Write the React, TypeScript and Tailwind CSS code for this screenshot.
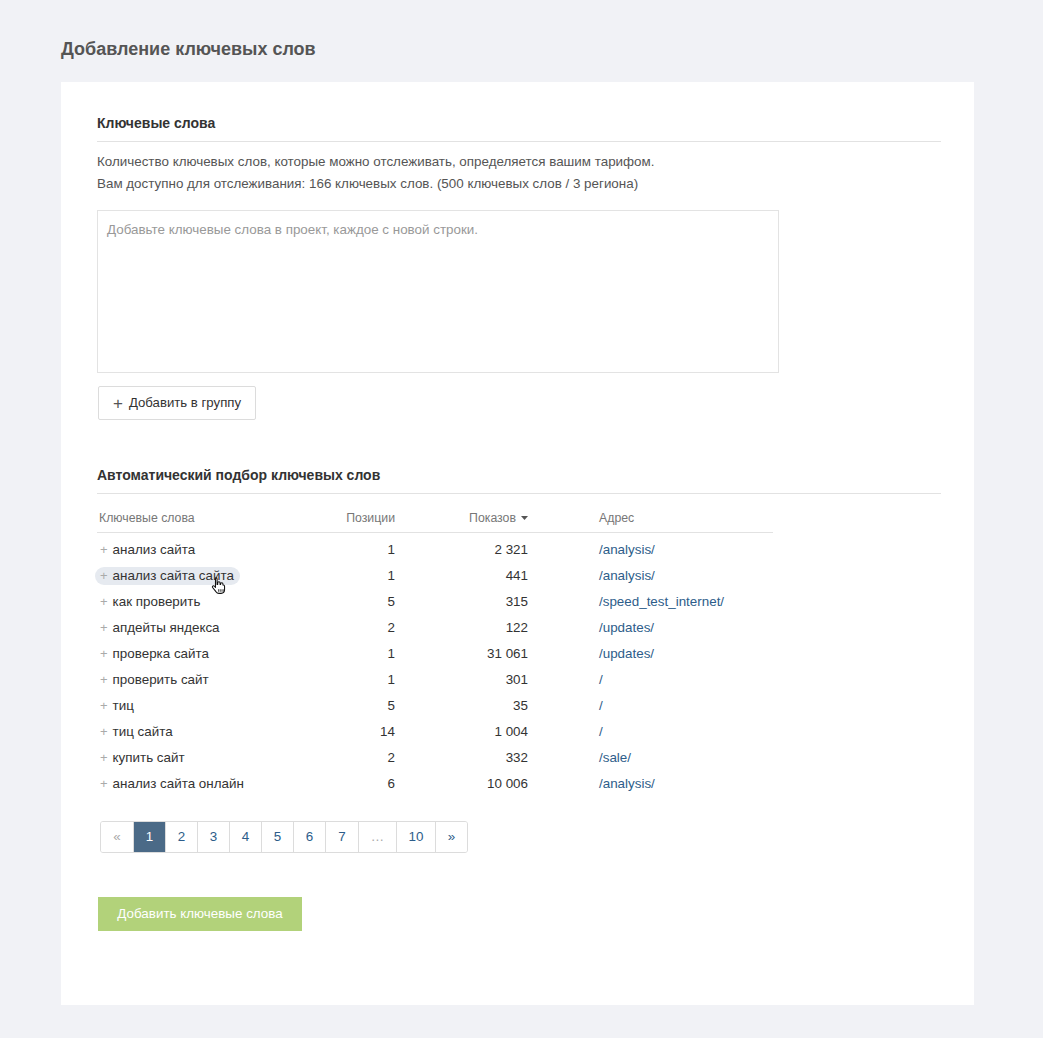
import React from "react";

const ROWS = [
    { kw: "анализ сайта", pos: "1", shows: "2 321", url: "/analysis/" },
    { kw: "анализ сайта сайта", pos: "1", shows: "441", url: "/analysis/", hover: true },
    { kw: "как проверить", pos: "5", shows: "315", url: "/speed_test_internet/" },
    { kw: "апдейты яндекса", pos: "2", shows: "122", url: "/updates/" },
    { kw: "проверка сайта", pos: "1", shows: "31 061", url: "/updates/" },
    { kw: "проверить сайт", pos: "1", shows: "301", url: "/" },
    { kw: "тиц", pos: "5", shows: "35", url: "/" },
    { kw: "тиц сайта", pos: "14", shows: "1 004", url: "/" },
    { kw: "купить сайт", pos: "2", shows: "332", url: "/sale/" },
    { kw: "анализ сайта онлайн", pos: "6", shows: "10 006", url: "/analysis/" },
];

const PAGES = [
    { label: "«", w: "w-[32px]", muted: true },
    { label: "1", w: "w-[32px]", active: true },
    { label: "2", w: "w-[32px]" },
    { label: "3", w: "w-[32px]" },
    { label: "4", w: "w-[32px]" },
    { label: "5", w: "w-[32px]" },
    { label: "6", w: "w-[32px]" },
    { label: "7", w: "w-[33px]" },
    { label: "…", w: "w-[38px]", muted: true },
    { label: "10", w: "w-[39px]" },
    { label: "»", w: "w-[32px]" },
];

function HandCursor() {
    return (
        <svg width="16" height="19" viewBox="0 0 15 17" className="absolute left-[114px] top-[9px]">
            <path
                d="M4.5 1.2c.7 0 1.2.5 1.2 1.2v5.2l.6-.1V6c0-.7.5-1.1 1.1-1.1s1.1.4 1.1 1.1v1.5l.5.1V7c0-.6.5-1 1.1-1s1.1.4 1.1 1v1l.4.1c.6 0 1.1.4 1.1 1v3.2c0 2-1.3 3.6-3.3 3.6H7.4c-1.2 0-2.1-.6-2.8-1.6L1.5 10.4c-.4-.6-.2-1.2.3-1.5.5-.3 1.1-.2 1.5.3l.9 1.1V2.4c0-.7.5-1.2 1.2-1.2z"
                fill="#fff"
                stroke="#111"
                strokeWidth="1"
                strokeLinejoin="round"
            />
            <path d="M7.3 12v2.4M9.3 12v2.4M11.3 12v2.4" stroke="#111" strokeWidth="0.9" />
        </svg>
    );
}

function SectionTitle({ children }: { children: React.ReactNode }) {
    return (
        <div className="border-b border-[#e2e2e2] pb-[9px]">
            <h3 className="text-[14px] font-bold leading-[18px] text-[#333]">{children}</h3>
        </div>
    );
}

export default function App() {
    return (
        <div
            className="min-h-[1038px] bg-[#f1f2f6] px-[61px] pt-[37px] pb-[34px]"
            style={{ fontFamily: '"Liberation Sans", Arial, sans-serif' }}
        >
            <h1 className="text-[18px] font-bold leading-[24px] text-[#555]">
                Добавление ключевых слов
            </h1>
            <div className="mt-[21px] w-[913px] bg-white pl-[36px] pr-[33px] pt-[32px] pb-[74px]">
                <SectionTitle>Ключевые слова</SectionTitle>
                <div className="mt-[9px] text-[13.4px] leading-[22px] text-[#555]">
                    <p>Количество ключевых слов, которые можно отслеживать, определяется вашим тарифом.</p>
                    <p>Вам доступно для отслеживания: 166 ключевых слов. (500 ключевых слов / 3 региона)</p>
                </div>
                <textarea
                    className="mt-[15px] block h-[163px] w-[682px] resize-none border border-[#e3e3e3] px-[9px] py-[10px] text-[13.4px] leading-[18px] text-[#333] placeholder:text-[#999] outline-none"
                    placeholder="Добавьте ключевые слова в проект, каждое с новой строки."
                />
                <button className="mt-[13px] ml-px flex h-[34px] w-[158px] items-center justify-center gap-[6px] rounded-[2px] border border-[#dcdcdc] bg-white text-[13.2px] text-[#333]">
                    <span className="text-[17px] leading-none text-[#555]">+</span>
                    Добавить в группу
                </button>

                <div className="mt-[46px]">
                    <SectionTitle>Автоматический подбор ключевых слов</SectionTitle>
                </div>

                <div className="mt-[16px] w-[676px] text-[13.4px]">
                    <div className="flex h-[23px] items-start border-b border-[#e2e2e2] text-[12.3px] leading-[16px] text-[#777]">
                        <div className="w-[248px] pl-[2px]">Ключевые слова</div>
                        <div className="w-[50px] text-right">Позиции</div>
                        <div className="flex w-[133px] items-center justify-end gap-[5px]">
                            Показов
                            <svg width="7" height="4" viewBox="0 0 7 4">
                                <path d="M0 0h7L3.5 4z" fill="#555" />
                            </svg>
                        </div>
                        <div className="pl-[71px]">Адрес</div>
                    </div>
                    <div className="pt-[4px]">
                        {ROWS.map((r) => (
                            <div key={r.kw} className="flex h-[26px] items-center leading-[18px]">
                                <div className="relative w-[248px]">
                                    <span
                                        className={
                                            r.hover
                                                ? "inline-flex items-center rounded-full bg-[#e6eaf0] pl-[5px] pr-[6px] -ml-[2px]"
                                                : "inline-flex items-center pl-[3px]"
                                        }
                                    >
                                        <span className="mr-[5px] text-[13px] text-[#aaa]">+</span>
                                        <span className="text-[#333]">{r.kw}</span>
                                    </span>
                                    {r.hover && <HandCursor />}
                                </div>
                                <div className="w-[50px] text-right text-[#333]">{r.pos}</div>
                                <div className="w-[133px] text-right text-[#333]">{r.shows}</div>
                                <div className="pl-[71px] text-[#2d5d8a]">{r.url}</div>
                            </div>
                        ))}
                    </div>
                </div>

                <div className="mt-[24px] ml-[3px] flex w-fit overflow-hidden rounded-[3px] border border-[#dcdcdc]">
                    {PAGES.map((p, i) => (
                        <div
                            key={p.label + i}
                            className={[
                                "flex h-[30px] items-center justify-center text-[13.4px]",
                                p.w,
                                i > 0 ? "border-l border-[#dcdcdc]" : "",
                                p.active
                                    ? "bg-[#4b6a87] text-white"
                                    : p.muted
                                    ? "bg-white text-[#aaa]"
                                    : "bg-white text-[#2d5d8a]",
                                p.label === "«" || p.label === "»" ? "text-[11px]" : "",
                            ].join(" ")}
                        >
                            {p.label}
                        </div>
                    ))}
                </div>

                <button className="mt-[44px] ml-px h-[34px] w-[204px] bg-[#b2d27a] text-[13.4px] text-white">
                    Добавить ключевые слова
                </button>
            </div>
        </div>
    );
}
